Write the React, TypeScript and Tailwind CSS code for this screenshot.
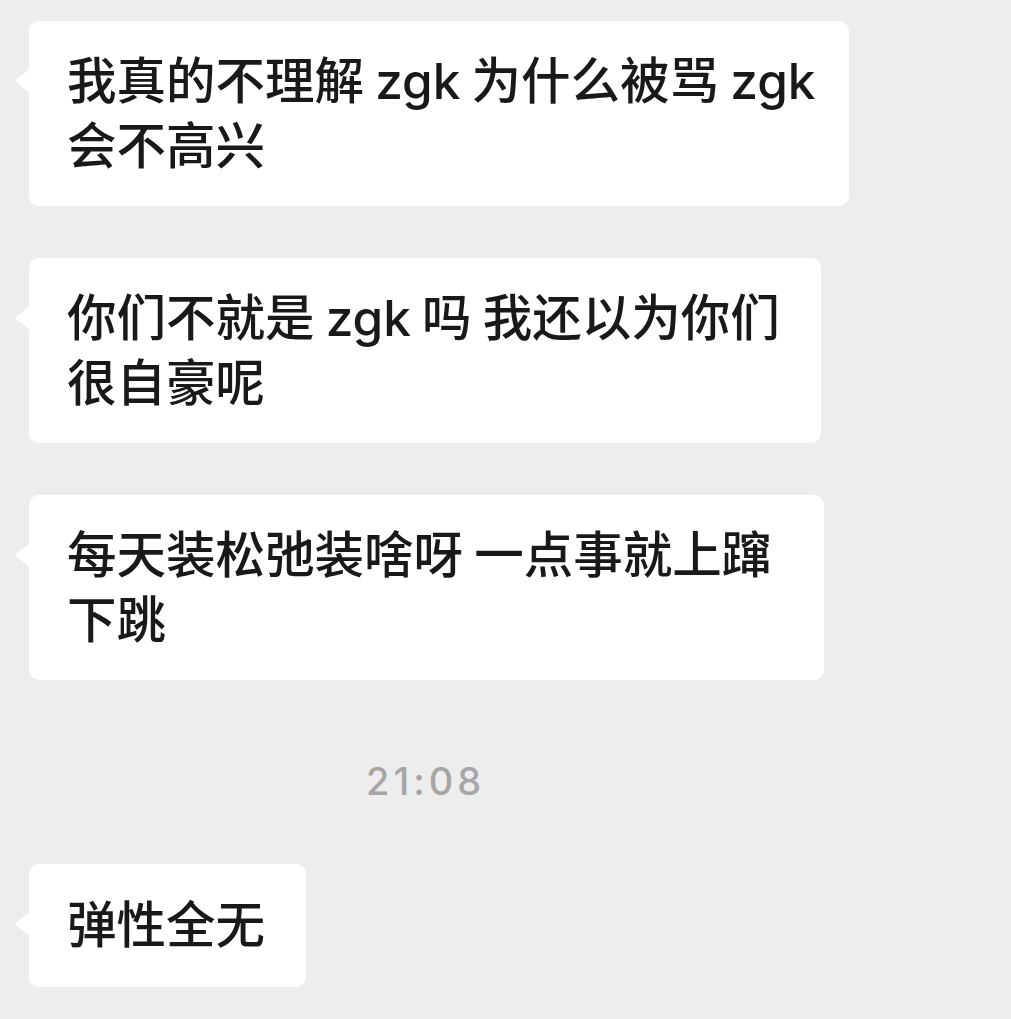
import React from "react";

const FONT = "Inter, 'Noto Sans CJK SC', sans-serif";

function Tail() {
  return (
    <svg
      className="absolute left-[-15px] top-[47px]"
      width="16"
      height="26"
      viewBox="0 0 16 26"
    >
      <path d="M16 1 L2.2 11.6 Q0.4 13 2.2 14.4 L16 25 Z" fill="#ffffff" />
    </svg>
  );
}

function Bubble({ lines, pad }: { lines: string[]; pad: string }) {
  return (
    <div className={"relative w-fit rounded-[10px] bg-white pl-[38px] " + pad}>
      <Tail />
      <div
        className="text-[49.5px] leading-[65px] text-[#191919] font-medium whitespace-pre [word-spacing:-2px]"
        style={{ fontFamily: FONT }}
      >
        {lines.map((l, i) => (
          <div key={i}>{l}</div>
        ))}
      </div>
    </div>
  );
}

export default function App() {
  return (
    <div className="min-h-screen w-full bg-[#ededed] pl-[29px] pt-[21px]">
      <div className="flex flex-col items-start">
        <Bubble pad="pr-[33px] pt-[28px] pb-[27px]" lines={["我真的不理解 zgk 为什么被骂 zgk", "会不高兴"]} />
        <div className="h-[52px]" />
        <Bubble pad="pr-[41px] pt-[28px] pb-[27px]" lines={["你们不就是 zgk 吗 我还以为你们", "很自豪呢"]} />
        <div className="h-[52px]" />
        <Bubble pad="pr-[53px] pt-[28px] pb-[27px]" lines={["每天装松弛装啥呀 一点事就上蹿", "下跳"]} />
        <div
          className="mt-[78px] pl-[337px] text-[38px] leading-[46px] tracking-[4px] text-[#a6a6a6] font-medium"
          style={{ fontFamily: FONT }}
        >
          21:08
        </div>
        <div className="h-[60px]" />
        <Bubble pad="pr-[41px] pt-[29px] pb-[29px]" lines={["弹性全无"]} />
      </div>
    </div>
  );
}
